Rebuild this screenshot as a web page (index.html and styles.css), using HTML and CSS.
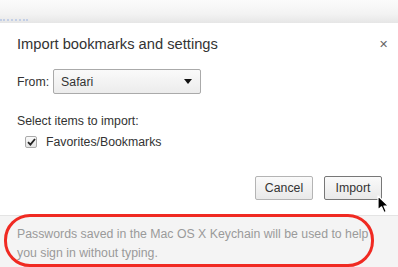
FILE: index.html
```html
<!DOCTYPE html>
<html lang="en">
<head>
    <meta charset="UTF-8">
    <title>Import bookmarks and settings</title>
    <link rel="stylesheet" href="styles.css">
</head>
<body>
<div class="backdrop">
    <span class="backdrop-link"></span>
</div>
<div class="dialog">
    <div class="dialog-head">
        <h1 class="dialog-title">Import bookmarks and settings</h1>
        <span class="close">&#x2715;</span>
    </div>
    <div class="row-from">
        <span>From:</span>
        <div class="select">
            <span>Safari</span>
            <span class="caret"></span>
        </div>
    </div>
    <div class="items-label">Select items to import:</div>
    <label class="check-row">
        <span class="checkbox">
            <svg width="9" height="8" viewBox="0 0 9 8"><path d="M1 4.2 L3.4 6.6 L8 1" fill="none" stroke="#222" stroke-width="1.8"/></svg>
        </span>
        <span>Favorites/Bookmarks</span>
    </label>
    <div class="actions">
        <button class="btn">Cancel</button>
        <button class="btn btn-default">Import</button>
        <svg class="cursor" width="14" height="20" viewBox="0 0 14 20"><path d="M1 1 L1 15 L4.5 11.8 L7 17.5 L9.3 16.5 L6.9 11 L11.5 11 Z" fill="#000" stroke="#fff" stroke-width="1.2" stroke-linejoin="round"/></svg>
    </div>
    <div class="footer">
        <p>Passwords saved in the Mac OS X Keychain will be used to help you sign in without typing.</p>
        <div class="highlight"></div>
    </div>
</div>
</body>
</html>
```

FILE: styles.css
```css
html, body {
    margin: 0;
    padding: 0;
    background: #fff;
    font-family: "Liberation Sans", Arial, sans-serif;
    color: #333;
}

.backdrop {
    height: 23px;
    background: linear-gradient(#fbfbfb, #f3f3f3 60%, #e6e6e6);
    position: relative;
}

.backdrop-link {
    position: absolute;
    left: 0;
    bottom: 0;
    width: 28px;
    height: 2px;
    border-top: 2px dotted #c3cfe6;
}

.dialog {
    background: #fff;
    height: 244px;
    display: flex;
    flex-direction: column;
}

.dialog-head {
    display: flex;
    justify-content: space-between;
    padding: 13px 10px 0 17px;
}

.dialog-title {
    margin: 0;
    font-size: 14.7px;
    font-weight: normal;
    color: #333;
}

.close {
    font-size: 11px;
    color: #666;
    margin-top: 2px;
}

.row-from {
    display: flex;
    align-items: center;
    gap: 4px;
    padding: 17px 0 0 17px;
    font-size: 12.3px;
}

.select {
    width: 131px;
    height: 23px;
    border: 1px solid #aaa;
    border-radius: 2px;
    background: linear-gradient(#fafafa, #ececec);
    display: flex;
    align-items: center;
    justify-content: space-between;
    padding: 0 8px 0 7px;
}

.caret {
    width: 0;
    height: 0;
    border-left: 4px solid transparent;
    border-right: 4px solid transparent;
    border-top: 5px solid #111;
}

.items-label {
    padding: 20px 0 0 17px;
    font-size: 12.3px;
}

.check-row {
    display: flex;
    align-items: center;
    gap: 9px;
    padding: 7px 0 0 25px;
    font-size: 12.3px;
}

.checkbox {
    width: 10px;
    height: 10px;
    border: 1px solid #aaa;
    border-radius: 2px;
    background: linear-gradient(#fafafa, #e4e4e4);
    display: flex;
    align-items: center;
    justify-content: center;
}

.actions {
    display: flex;
    justify-content: flex-end;
    gap: 11px;
    padding: 27px 16px 0 0;
    position: relative;
}

.btn {
    width: 58px;
    height: 24px;
    border: 1px solid #b4b4b4;
    border-radius: 2px;
    background: linear-gradient(#fafafa, #e9e9e9);
    font-family: inherit;
    font-size: 12.3px;
    color: #333;
    padding: 0;
}

.btn-default {
    border-color: #777;
}

.cursor {
    position: absolute;
    left: 377px;
    top: 46px;
}

.footer {
    margin-top: auto;
    height: 51px;
    background: #f4f4f4;
    border-top: 1px solid #e4e4e4;
    position: relative;
}

.footer p {
    margin: 0;
    padding: 9px 20px 0 17px;
    font-size: 12.3px;
    line-height: 19px;
    color: #9a9a9a;
}

.highlight {
    position: absolute;
    left: 4px;
    top: -2px;
    width: 364px;
    height: 47px;
    border: 3px solid #f02a22;
    border-radius: 26px;
}
```
